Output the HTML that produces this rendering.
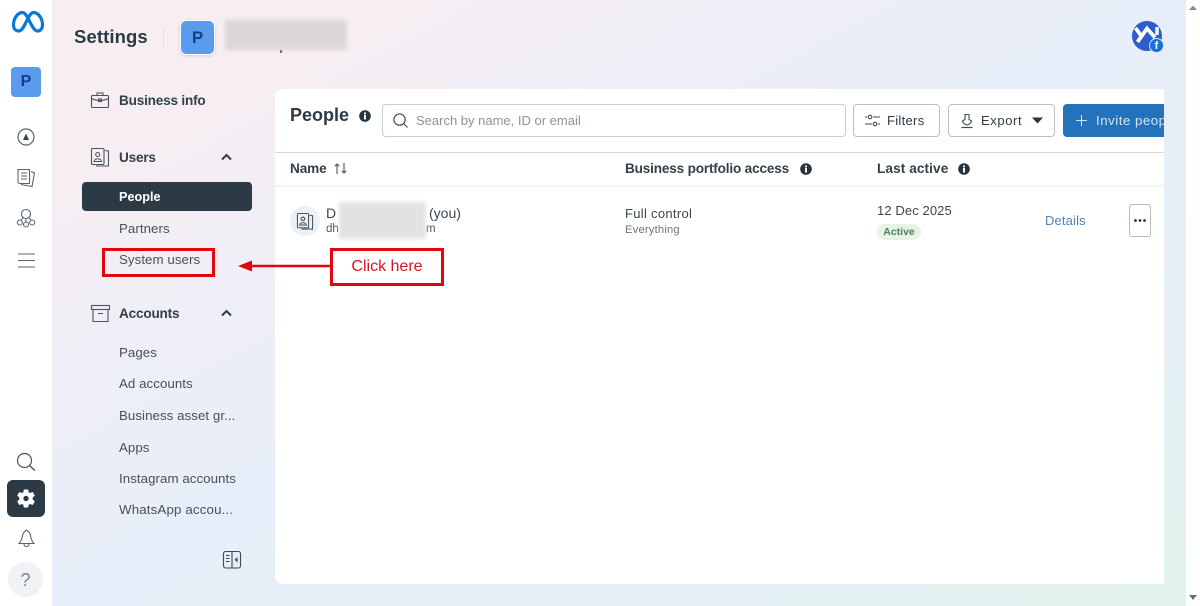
<!DOCTYPE html>
<html lang="en"><head><meta charset="utf-8"><title>Settings - People</title>
<style>
*{box-sizing:border-box}
html,body{margin:0;padding:0;width:1200px;height:606px;overflow:hidden;background:#fff}
body{position:relative;font-family:"Liberation Sans",sans-serif;color:#1c2b33}
#w{position:absolute;left:0;top:0;width:1200px;height:606px;overflow:hidden;filter:blur(.35px);background:#fff}
.t{position:absolute;white-space:nowrap;line-height:1}
.abs{position:absolute}
svg{position:absolute;overflow:visible}
.bg{position:absolute;left:52px;top:0;width:1134px;height:606px;
background:linear-gradient(to bottom right,#f8eef1 0%,#f6eef3 16%,#e7eef9 50%,#e5f0f6 76%,#e2f3ec 100%)}
.nav{font-size:13.3px;color:#44525b;letter-spacing:.05px}
.head{font-size:13.6px;font-weight:bold;color:#344049;letter-spacing:-.2px}
.col{font-size:13.6px;font-weight:bold;color:#344049;letter-spacing:-.1px}
.btn{position:absolute;height:33px;top:104px;border:1px solid #b9bfc4;border-radius:4px;background:#fff}
</style></head><body><div id="w">
<div class="bg"></div>
<div class="abs" style="left:0;top:0;width:52px;height:606px;background:#fff"></div>
<svg style="left:1186px;top:0" width="14" height="606"><path d="M3 10L7 5.500L11 10Z" fill="#8a8a8a"/><path d="M3 595H11L7 600Z" fill="#6f6f6f"/></svg>

<!-- Meta logo -->
<svg style="left:11px;top:10px" width="34" height="24" viewBox="0 0 34 24"><path d="M8 21C4.500 21 2.500 18.500 2.500 15C2.500 8 7 2.500 11.500 2.500C17 2.500 20.500 21 26.500 21C29.500 21 31.500 18.500 31.500 15C31.500 8 27 2.500 22.500 2.500C17 2.500 13.500 21 8 21Z" fill="none" stroke="#0a78d6" stroke-width="3.200"/></svg>

<!-- Rail -->
<div class="abs" style="left:11px;top:67px;width:30px;height:30px;background:#5a9bef;border-radius:4px"></div>
<div class="t" style="left:11px;top:74px;width:30px;text-align:center;font-size:16px;font-weight:bold;color:#123f86">P</div>
<svg style="left:17px;top:128px" width="18" height="18" viewBox="0 0 18 18"><circle cx="9" cy="9" r="8" fill="none" stroke="#5a666e" stroke-width="1.200"/><path d="M9 5.500L12 12H6Z" fill="#3b4750"/></svg>
<svg style="left:16px;top:168px" width="20" height="20" viewBox="0 0 20 20" fill="none" stroke="#5a666e" stroke-width="1.100"><path d="M2 1.500H13.500V15.500H4C2.800 15.500 2 14.700 2 13.500Z"/><path d="M15 3.500L18.500 5L16 18.500L5 16.500"/><path d="M5 5H11M5 8H11M5 11H11" stroke-width="1"/></svg>
<svg style="left:16px;top:208px" width="20" height="21" viewBox="0 0 20 21" fill="none" stroke="#5a666e" stroke-width="1.100"><circle cx="10" cy="6" r="4.500"/><circle cx="3.800" cy="14.500" r="2.500"/><circle cx="10" cy="16.500" r="2.500"/><circle cx="16.200" cy="14.500" r="2.500"/><path d="M7 9.500L5 12.500M10 10.500V14M13 9.500L15 12.500"/></svg>
<svg style="left:18px;top:253px" width="17" height="15" viewBox="0 0 17 15" stroke="#5a666e" stroke-width="1.100"><path d="M0 1H17M0 7.500H17M0 14H17"/></svg>
<svg style="left:17px;top:453px" width="19" height="18" viewBox="0 0 19 18" fill="none" stroke="#4b5760" stroke-width="1.200"><circle cx="7.500" cy="7.500" r="7"/><path d="M12.500 12.500L18 17.500" stroke-width="1.500"/></svg>
<div class="abs" style="left:7px;top:480px;width:38px;height:37px;background:#2b3a44;border-radius:6px"></div>
<svg style="left:16px;top:489px" width="20" height="20" viewBox="0 0 20 20"><path d="M8.300 1H11.700L12.200 3.500L14 4.500L16.500 3.600L18.200 6.500L16.200 8.200V10.800L18.200 12.500L16.500 15.400L14 14.500L12.200 15.500L11.700 18H8.300L7.800 15.500L6 14.500L3.500 15.400L1.800 12.500L3.800 10.800V8.200L1.800 6.500L3.500 3.600L6 4.500L7.800 3.500Z" fill="#fff" stroke="#fff" stroke-linejoin="round"/><circle cx="10" cy="9.500" r="2.700" fill="#2b3a44"/></svg>
<svg style="left:18px;top:529px" width="17" height="20" viewBox="0 0 17 20" fill="none" stroke="#5a666e" stroke-width="1.100"><path d="M8.500 1C11.500 3 12.500 5 12.800 8C13 11 14.500 12.500 16 14.500H1C2.500 12.500 4 11 4.200 8C4.500 5 5.500 3 8.500 1Z"/><path d="M6 15C6.200 18.500 10.800 18.500 11 15"/></svg>
<div class="abs" style="left:8px;top:562px;width:35px;height:35px;border-radius:50%;background:#f0f2f5"></div>
<div class="t" style="left:8px;top:571px;width:35px;text-align:center;font-size:18px;color:#7a868e">?</div>

<!-- Top -->
<div class="t" style="left:74px;top:28px;font-size:18.500px;font-weight:bold;color:#2b3a44;letter-spacing:.1px">Settings</div>
<div class="abs" style="left:163px;top:27px;width:1px;height:21px;background:#e6e2e6"></div>
<div class="abs" style="left:180px;top:20px;width:35px;height:35px;background:#5a9bef;border-radius:6px;border:1.500px solid #fff;box-shadow:0 1px 3px rgba(0,0,0,.15)"></div>
<div class="t" style="left:180px;top:29px;width:35px;text-align:center;font-size:17px;font-weight:bold;color:#123f86">P</div>
<div class="abs" style="left:225px;top:20px;width:122px;height:30px;background:#dcd7d7;filter:blur(2px)"></div>
<div class="abs" style="left:280px;top:50px;width:1.500px;height:3px;background:#777"></div>

<!-- avatar -->
<div class="abs" style="left:1132px;top:21px;width:30px;height:30px;border-radius:50%;background:#2f5cc9;overflow:hidden">
<svg style="left:0;top:0" width="30" height="30" viewBox="0 0 30 30" fill="none" stroke="#fff" stroke-width="3.800"><path d="M3.500 7L9 14.500"/><path d="M5.500 21L15 7.500L23 16.500"/><path d="M25 6V14" stroke-width="3.400"/></svg>
</div>
<div class="abs" style="left:1149px;top:38px;width:15px;height:15px;border-radius:50%;background:#1671d9;border:1.500px solid #dbe7fa"></div>
<div class="t" style="left:1149px;top:41px;width:15px;text-align:center;font-size:11px;font-weight:bold;color:#fff">f</div>

<!-- Sidebar -->
<svg style="left:91px;top:92px" width="18" height="16" viewBox="0 0 18 16" fill="none" stroke="#4a565f" stroke-width="1.100"><rect x=".5" y="3.500" width="17" height="12" rx="1"/><path d="M.5 6.500C5 9 13 9 17.500 6.500M6 3.500V1H12V3.500"/><rect x="7.500" y="7" width="3" height="2.500"/></svg>
<div class="t head" style="left:119px;top:94px">Business info</div>
<svg style="left:91px;top:148px" width="18" height="19" viewBox="0 0 18 19" fill="none" stroke="#4a565f" stroke-width="1.100"><rect x=".5" y=".5" width="12.500" height="16" rx="1"/><path d="M14 2.500L17.500 3V18L5 18"/><circle cx="6.700" cy="6.500" r="2"/><path d="M3 13.500C3 10 10.500 10 10.500 13.500Z"/></svg>
<div class="t head" style="left:119px;top:151px">Users</div>
<svg style="left:221px;top:153px" width="11" height="8" viewBox="0 0 11 8" fill="none" stroke="#2b3a44" stroke-width="2"><path d="M1 6.500L5.500 2L10 6.500"/></svg>
<div class="abs" style="left:82px;top:182px;width:170px;height:29px;background:#2b3a44;border-radius:4px"></div>
<div class="t" style="left:119px;top:191px;font-size:12.700px;font-weight:bold;color:#fff">People</div>
<div class="t nav" style="left:119px;top:222px">Partners</div>
<div class="t nav" style="left:119px;top:253px">System users</div>
<svg style="left:91px;top:305px" width="19" height="17" viewBox="0 0 19 17" fill="none" stroke="#4a565f" stroke-width="1.100"><rect x=".5" y=".5" width="18" height="4"/><path d="M2 4.500V16.500H17V4.500M7 8.500H12"/></svg>
<div class="t head" style="left:119px;top:307px">Accounts</div>
<svg style="left:221px;top:309px" width="11" height="8" viewBox="0 0 11 8" fill="none" stroke="#2b3a44" stroke-width="2"><path d="M1 6.500L5.500 2L10 6.500"/></svg>
<div class="t nav" style="left:119px;top:346px">Pages</div>
<div class="t nav" style="left:119px;top:377px">Ad accounts</div>
<div class="t nav" style="left:119px;top:409px">Business asset gr...</div>
<div class="t nav" style="left:119px;top:441px">Apps</div>
<div class="t nav" style="left:119px;top:472px">Instagram accounts</div>
<div class="t nav" style="left:119px;top:503px;letter-spacing:.15px">WhatsApp accou...</div>
<svg style="left:223px;top:551px" width="18" height="18" viewBox="0 0 18 18" fill="none" stroke="#3f4b54" stroke-width="1.100"><rect x=".5" y=".5" width="17" height="16.500" rx="2"/><path d="M9 .5V17M3 4.500H6.500M3 7.500H6.500M3 10.500H6.500"/><path d="M14.500 6V11.500L11.500 8.750Z" fill="#3f4b54" stroke="none"/></svg>

<!-- Panel -->
<div class="abs" style="left:275px;top:89px;width:889px;height:495px;background:#fff;border-radius:8px 0 0 8px;overflow:hidden">
  <div class="abs" style="left:0;top:63px;width:889px;height:1px;background:#d8dcdf"></div>
  <div class="abs" style="left:0;top:96px;width:889px;height:2px;background:#f3f4f5"></div>
</div>
<div class="t" style="left:290px;top:106px;font-size:18px;font-weight:bold;color:#2b3a44">People</div>
<svg style="left:359px;top:110px" width="12" height="12" viewBox="0 0 12 12"><circle cx="6" cy="6" r="5.800" fill="#26343d"/><rect x="5" y="5" width="2" height="4.500" fill="#fff"/><rect x="5" y="2.500" width="2" height="1.800" fill="#fff"/></svg>
<div class="abs" style="left:382px;top:104px;width:464px;height:33px;border:1px solid #c9cdd1;border-radius:4px;background:#fff"></div>
<svg style="left:393px;top:113px" width="15" height="15" viewBox="0 0 16 16" fill="none" stroke="#3f4b54" stroke-width="1.200"><circle cx="7" cy="7" r="6"/><path d="M11.300 11.300L15.500 15.500"/></svg>
<div class="t" style="left:416px;top:114px;font-size:13px;color:#8a949b">Search by name, ID or email</div>

<div class="btn" style="left:853px;width:87px"></div>
<svg style="left:865px;top:114px" width="16" height="13" viewBox="0 0 16 13" fill="none" stroke="#3f4b54" stroke-width="1.100"><path d="M0 3H2M8 3H15M0 10H7M13 10H15"/><circle cx="5" cy="3" r="1.800"/><circle cx="10" cy="10" r="1.800"/></svg>
<div class="t" style="left:887px;top:114px;font-size:13px;color:#2f3c45;letter-spacing:.3px">Filters</div>
<div class="btn" style="left:948px;width:107px"></div>
<svg style="left:961px;top:114px" width="12" height="14" viewBox="0 0 12 14" fill="none" stroke="#3f4b54" stroke-width="1.100"><path d="M4 .5H8V5.500L10.500 7C10.500 9 8 10.500 6 11C4 10.500 1.500 9 1.500 7L4 5.500Z" stroke-linejoin="round"/><path d="M.5 13.500H11.500" stroke-width="1.200"/></svg>
<div class="t" style="left:981px;top:114px;font-size:13px;color:#2f3c45;letter-spacing:.6px">Export</div>
<svg style="left:1032px;top:117px" width="11" height="7" viewBox="0 0 11 7"><path d="M0 .5H11L5.500 6.500Z" fill="#26343d"/></svg>
<div class="abs" style="left:1063px;top:104px;width:101px;height:33px;background:#2572bc;border-radius:4px 0 0 4px;overflow:hidden">
  <div class="t" style="left:33px;top:10px;font-size:13.300px;color:#d5e5f5;letter-spacing:.5px">Invite people</div>
</div>
<svg style="left:1076px;top:115px" width="11" height="11" viewBox="0 0 11 11" stroke="#cfe0f2" stroke-width="1.100"><path d="M5.500 0V11M0 5.500H11"/></svg>

<div class="t col" style="left:290px;top:162px">Name</div>
<svg style="left:334px;top:163px" width="13" height="11" viewBox="0 0 13 11" fill="none" stroke="#4a565f" stroke-width="1.100"><path d="M3 11V1M.8 3.200L3 1L5.200 3.200M10 0V10M7.800 7.800L10 10L12.200 7.800"/></svg>
<div class="t col" style="left:625px;top:162px;letter-spacing:-.18px">Business portfolio access</div>
<svg style="left:800px;top:163px" width="12" height="12" viewBox="0 0 12 12"><circle cx="6" cy="6" r="5.800" fill="#26343d"/><rect x="5" y="5" width="2" height="4.500" fill="#fff"/><rect x="5" y="2.500" width="2" height="1.800" fill="#fff"/></svg>
<div class="t col" style="left:877px;top:162px;letter-spacing:.1px">Last active</div>
<svg style="left:958px;top:163px" width="12" height="12" viewBox="0 0 12 12"><circle cx="6" cy="6" r="5.800" fill="#26343d"/><rect x="5" y="5" width="2" height="4.500" fill="#fff"/><rect x="5" y="2.500" width="2" height="1.800" fill="#fff"/></svg>

<!-- Row -->
<div class="abs" style="left:290px;top:206px;width:30px;height:30px;border-radius:50%;background:#eef1f3"></div>
<svg style="left:297px;top:213px" width="16" height="17" viewBox="0 0 18 19" fill="none" stroke="#4a565f" stroke-width="1.200"><rect x=".5" y=".5" width="12.500" height="16" rx="1"/><path d="M14 2.500L17.500 3V18L5 18"/><circle cx="6.700" cy="6.500" r="2"/><path d="M3 13.500C3 10 10.500 10 10.500 13.500Z"/></svg>
<div class="t" style="left:326px;top:206px;font-size:14px;color:#3a464f">D</div>
<div class="t" style="left:429px;top:206px;font-size:14px;color:#3a464f">(you)</div>
<div class="t" style="left:326px;top:224px;font-size:11.500px;color:#4a565f">dh</div>
<div class="t" style="left:426px;top:224px;font-size:11.500px;color:#4a565f">m</div>
<div class="abs" style="left:339px;top:202px;width:87px;height:37px;background:#e2e2e2;filter:blur(2px)"></div>
<div class="t" style="left:625px;top:207px;font-size:13px;color:#3a464f;letter-spacing:.3px">Full control</div>
<div class="t" style="left:625px;top:225px;font-size:11.200px;color:#68747c;letter-spacing:.2px">Everything</div>
<div class="t" style="left:877px;top:204px;font-size:13px;color:#3a464f;letter-spacing:.1px">12 Dec 2025</div>
<div class="abs" style="left:877px;top:224px;width:44px;height:16px;background:#e9f2e9;border-radius:8px"></div>
<div class="t" style="left:877px;top:227px;width:44px;text-align:center;font-size:10.500px;font-weight:bold;color:#4b8357">Active</div>
<div class="t" style="left:1045px;top:214px;font-size:13px;color:#4d86bd;letter-spacing:.15px">Details</div>
<div class="abs" style="left:1129px;top:204px;width:22px;height:33px;border:1px solid #b5bbc0;border-radius:3px;background:#fff"></div>
<svg style="left:1134px;top:219px" width="12" height="3" viewBox="0 0 12 3" fill="#26343d"><circle cx="1.500" cy="1.500" r="1.400"/><circle cx="6" cy="1.500" r="1.400"/><circle cx="10.500" cy="1.500" r="1.400"/></svg>

<!-- Annotation -->
<div class="abs" style="left:102px;top:248px;width:113px;height:29px;border:3px solid #e2060f"></div>
<div class="abs" style="left:330px;top:248px;width:114px;height:38px;border:3px solid #e2060f"></div>
<div class="t" style="left:330px;top:259px;width:114px;text-align:center;font-size:16px;color:#d9161d">Click here</div>
<svg style="left:238px;top:260px" width="93" height="12" viewBox="0 0 93 12"><path d="M0 6L14 .5V4.700H93V7.300H14V11.500Z" fill="#e2060f"/></svg>
</div></body></html>
